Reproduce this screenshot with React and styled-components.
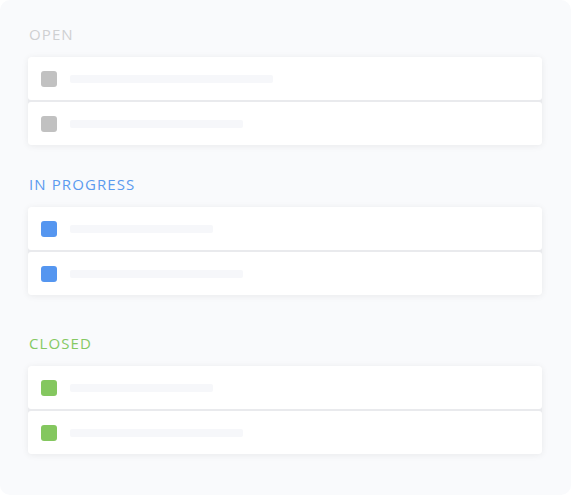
import React from "react";
import styled, { createGlobalStyle } from "styled-components";

const GlobalStyle = createGlobalStyle`
  html, body {
    margin: 0;
    padding: 0;
    background: #ffffff;
  }
  * {
    box-sizing: border-box;
  }
`;

const sections = [
  { title: "OPEN", color: "#cfd0d2", box: "#c1c1c1", bars: [203, 173], gap: 0 },
  { title: "IN PROGRESS", color: "#5b9bef", box: "#5596f0", bars: [143, 173], gap: 30 },
  { title: "CLOSED", color: "#85c963", box: "#84c75f", bars: [143, 173], gap: 39 },
];

const App = () => {
  return (
    <>
      <GlobalStyle />
      <Panel>
        {sections.map((s) => (
          <Section key={s.title} gap={s.gap}>
            <Label color={s.color}>{s.title}</Label>
            <List>
              {s.bars.map((w, i) => (
                <Row key={i}>
                  <Check color={s.box} />
                  <Bar style={{ width: w }} />
                </Row>
              ))}
            </List>
          </Section>
        ))}
      </Panel>
    </>
  );
};

export default App;

const Panel = styled.div`
  min-height: 495px;
  background: #f9fafc;
  border-radius: 10px;
  padding: 25px 29px 0 28px;
  font-family: "Open Sans", "Liberation Sans", sans-serif;
`;

const Section = styled.section`
  margin-top: ${(props) => props.gap}px;
`;

const Label = styled.div`
  font-size: 15px;
  line-height: 18px;
  font-weight: 400;
  letter-spacing: 1.1px;
  color: ${(props) => props.color};
  padding-left: 1px;
  margin-bottom: 14px;
`;

const List = styled.div`
  display: flex;
  flex-direction: column;
  border-radius: 3px;
  background: #e9eaed;
  box-shadow: 0 1px 7px rgba(0, 0, 0, 0.07);
`;

const Row = styled.div`
  height: 43px;
  display: flex;
  align-items: center;
  gap: 13px;
  padding-left: 13px;
  background: #ffffff;
  border-radius: 3px;

  & + & {
    margin-top: 2px;
  }
`;

const Check = styled.span`
  width: 16px;
  height: 16px;
  border-radius: 3px;
  background: ${(props) => props.color};
  flex-shrink: 0;
`;

const Bar = styled.span`
  height: 8px;
  border-radius: 2px;
  background: #f6f7fa;
`;
